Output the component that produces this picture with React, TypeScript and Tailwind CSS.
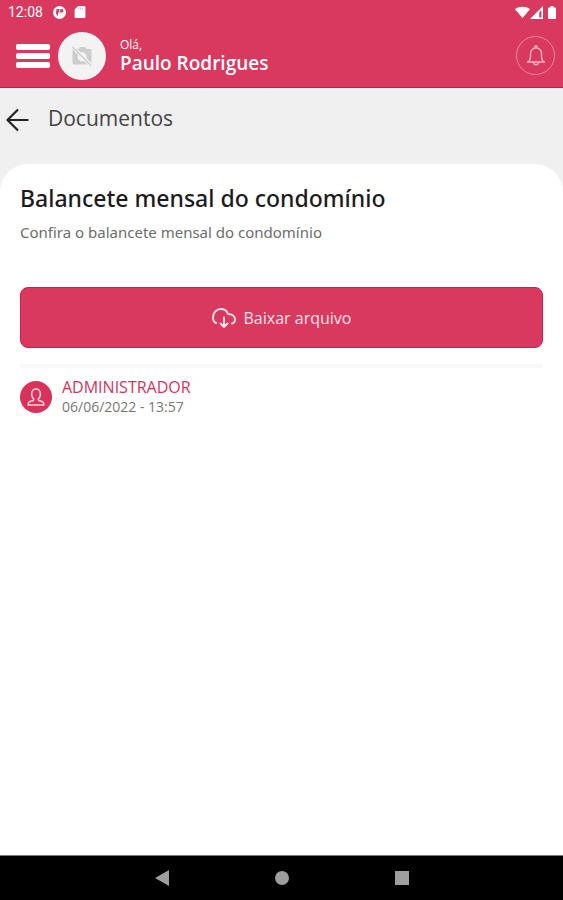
function StatusBar() {
  return (
    <div className="flex h-6 items-center justify-between pl-2 pr-1 text-white">
      <div className="flex items-center">
        <span className="font-[Roboto,sans-serif] text-sm leading-4">12:08</span>
        <svg className="ml-2.5 size-[13px]" viewBox="0 0 13 13" aria-hidden="true">
          <circle cx="6.5" cy="6.5" r="6.5" fill="#fff" />
          <path d="M3.500 3h2.700v3.500H5V10A4 4 0 0 1 3 7z M7.200 3h1.500a1.700 1.700 0 0 1 0 3.500H7.200z" fill="#d9395e" />
        </svg>
        <svg className="ml-2 size-3" viewBox="0 0 12 12" aria-hidden="true">
          <path d="M4 0h6.500a.9.900 0 0 1 .9.900v10.200a.9.900 0 0 1-.9.900h-9a.9.900 0 0 1-.9-.9V3.500z" fill="#fff" />
          <path d="M4.500 1.500v2M6.500 1.500v2M8.500 1.500v2" stroke="#eda0b2" strokeWidth="0.800" />
        </svg>
      </div>
      <div className="flex items-center">
        <svg className="h-3 w-[15px]" viewBox="0 0 15 12" aria-hidden="true">
          <path d="M0 3.200C4 0 11 0 15 3.200L7.500 12z" fill="#fff" />
        </svg>
        <svg className="size-[13px]" viewBox="0 0 12 12" aria-hidden="true">
          <path d="M12 0v12H0z" fill="#fff" />
          <path d="M10.500 4v6.500H8.500V6z" fill="#d9395e" />
        </svg>
        <svg className="ml-1 mr-0.5 h-[13px] w-[10px]" viewBox="0 0 10 13" aria-hidden="true">
          <path d="M3.500 0h3v1.500H8a1 1 0 0 1 1 1V12a1 1 0 0 1-1 1H2a1 1 0 0 1-1-1V2.500a1 1 0 0 1 1-1h1.500z" fill="#fff" />
        </svg>
      </div>
    </div>
  );
}

function Header() {
  return (
    <header className="flex h-16 items-center border-b border-[#cf1549] pl-4 pr-2 text-white">
      <button type="button" aria-label="Menu" className="flex w-[34px] flex-col gap-[3px]">
        <span className="h-1.5 w-full rounded-xs bg-white" />
        <span className="h-1.5 w-full rounded-xs bg-white" />
        <span className="h-1.5 w-full rounded-xs bg-white" />
      </button>
      <div className="ml-2 flex size-12 shrink-0 items-center justify-center rounded-full bg-[#f3f3f3]">
        <svg className="size-6" viewBox="0 0 24 24" aria-hidden="true">
          <path
            d="M7 5h1.500L10 3h5l1.700 2H20a1.500 1.500 0 0 1 1.500 1.500V19l-5-5a4.500 4.500 0 0 0-5.500-5.500zM2.500 5.500l5.500 5.500a4.500 4.500 0 0 0 6 6l3.500 3.500H4A1.500 1.500 0 0 1 2.500 19z"
            fill="#cdcdcd"
          />
          <path d="M2.500 3l19 19" stroke="#cdcdcd" strokeWidth="1.500" />
        </svg>
      </div>
      <div className="mb-0.5 ml-3.5 flex-1">
        <p className="text-xs leading-4">Olá,</p>
        <p className="text-[19px] font-semibold leading-5">Paulo Rodrigues</p>
      </div>
      <button
        type="button"
        aria-label="Notificações"
        className="flex size-[39px] items-center justify-center rounded-full border border-[#f0899f] text-[#ffafc0]"
      >
        <svg className="size-[22px]" viewBox="0 0 22 22" fill="none" stroke="currentColor" strokeWidth="1.400" strokeLinecap="round" strokeLinejoin="round" aria-hidden="true">
          <path d="M9.800 3V2a1.200 1.200 0 0 1 2.400 0v1M2.500 17c2-1 3-3 3-5V8.500a5.500 5.500 0 0 1 11 0V12c0 2 1 4 3 5zM8.800 17.500a2.200 2.200 0 0 0 4.400 0" />
        </svg>
      </button>
    </header>
  );
}

function NavigationBar() {
  return (
    <nav aria-label="Sistema" className="flex h-[45px] items-center justify-center border-t border-[#777] bg-black">
      <div className="flex w-[360px] justify-around">
        <button type="button" aria-label="Voltar" className="flex w-12 justify-center">
          <svg className="size-4" viewBox="0 0 16 16" aria-hidden="true">
            <path d="M15 0v16L1 8z" fill="#9e9e9e" />
          </svg>
        </button>
        <button type="button" aria-label="Início" className="flex w-12 items-center justify-center">
          <span className="size-3.5 rounded-full bg-[#9e9e9e]" />
        </button>
        <button type="button" aria-label="Recentes" className="flex w-12 items-center justify-center">
          <span className="size-3.5 bg-[#9e9e9e]" />
        </button>
      </div>
    </nav>
  );
}

export default function App() {
  return (
    <div className="flex min-h-screen flex-col bg-[#f0f0f0] font-['Open_Sans','Noto_Sans',sans-serif]">
      <div className="bg-[#d9395e]">
        <StatusBar />
        <Header />
      </div>

      <div className="flex h-[76px] items-start gap-[18px] pl-1.5 pt-4">
        <button type="button" aria-label="Voltar" className="mt-1 text-[#222]">
          <svg className="size-6" viewBox="0 0 24 24" fill="none" stroke="currentColor" strokeWidth="2.200" aria-hidden="true">
            <path d="M22.500 12H1.500M12 1.500L1.500 12 12 22.500" />
          </svg>
        </button>
        <h1 className="text-[21px] leading-7 text-[#444]">Documentos</h1>
      </div>

      <main className="flex-1 rounded-t-[28px] bg-white px-5 pt-5">
        <h2 className="font-['Noto_Sans',sans-serif] text-[23px] font-medium leading-7 text-[#1c1c1c]">
          Balancete mensal do condomínio
        </h2>
        <p className="mt-2 font-['Noto_Sans',sans-serif] text-[15px] leading-6 text-[#6c6c6c]">
          Confira o balancete mensal do condomínio
        </p>

        <button
          type="button"
          className="mt-[43px] flex h-[61px] w-full items-center justify-center gap-2 rounded-lg border border-[#cf1f4f] bg-[#d9395e] text-base text-[#ffe3ea]"
        >
          <svg className="h-5 w-6" viewBox="0 0 24 20" fill="none" stroke="currentColor" strokeWidth="1.900" strokeLinecap="round" strokeLinejoin="round" aria-hidden="true">
            <path d="M4 15C1.500 14 1 11.500 1 9.500 1 4.500 4.500 1 9 1c3.500 0 6 2 7 5 4 0 7 2 7 5.500 0 2-1 3.500-3 4M12 9.500V19M8.500 15.500l3.500 3.500 3.500-3.500" />
          </svg>
          Baixar arquivo
        </button>

        <div className="mt-4 flex items-center gap-2.5 border-t-4 border-[#f8f8f8] pt-[9px]">
          <span className="flex size-8 items-center justify-center rounded-full bg-[#d9335c] text-[#ffd5df]">
            <svg className="size-5" viewBox="0 0 20 20" fill="none" stroke="currentColor" strokeWidth="1.400" strokeLinejoin="round" aria-hidden="true">
              <path d="M7.800 12C4.500 9.500 4.800 2 10 2s5.500 7.500 2.200 10c-.2 1.300.5 1.700 2.300 2 2.500.5 3.500 1.500 3.500 4H2c0-2.500 1-3.500 3.500-4 1.800-.3 2.500-.7 2.300-2z" />
            </svg>
          </span>
          <div>
            <p className="text-base leading-5 text-[#d9335c]">ADMINISTRADOR</p>
            <p className="text-sm leading-5 text-[#777]">06/06/2022 - 13:57</p>
          </div>
        </div>
      </main>

      <NavigationBar />
    </div>
  );
}
